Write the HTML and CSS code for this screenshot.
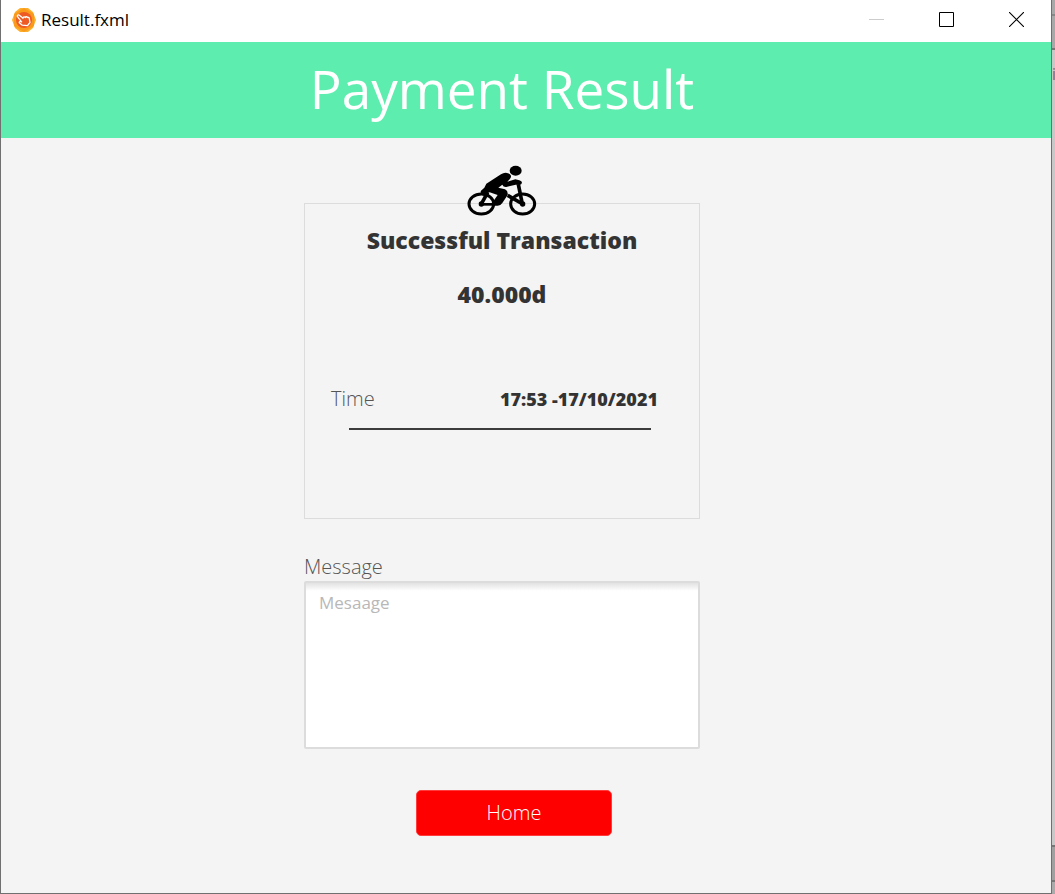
FILE: index.html
```html
<!DOCTYPE html>
<html lang="en">
<head>
<meta charset="utf-8">
<title>Result.fxml</title>
<link rel="stylesheet" href="styles.css">
</head>
<body>
<div class="desktop">
  <div class="window">
    <header class="titlebar">
      <svg class="app-icon" viewBox="0 0 24 24" aria-hidden="true">
        <path d="M8 0h8l5 4 3 8-3 8-5 4H8l-5-4-3-8 3-8z" fill="#fcb02c"/>
        <path d="M12 0l5 3 5 3v12l-5 3-5 3-5-3-5-3V6l5-3z" fill="#f99a1c"/>
        <circle cx="12" cy="12" r="8" fill="#ee5a24"/>
        <path d="M5.500 7.500c.6-.9 1.500-.6 2.200 0l3.300 2.700c0-1.500 1.500-1.700 2.300-.7.400-1 1.700-1 2.200 0 .8-.5 1.600 0 1.800 1l.7 4-2.500 3.200-5.200-.5-3-2.500c-.3-1 .5-1.400 1.300-1.200l1 .4L6 9.300c-.6-.6-.9-1.200-.5-1.800z" fill="#ee5a24" stroke="#fff" stroke-width="1.300" stroke-linejoin="round"/>
      </svg>
      <span class="titlebar-text">Result.fxml</span>
      <div class="window-controls">
        <button class="control" aria-label="Minimize" disabled>
          <svg class="control-icon" viewBox="0 0 15 15"><path d="M0 7.500h15" stroke="#ccc"/></svg>
        </button>
        <button class="control" aria-label="Maximize">
          <svg class="control-icon" viewBox="0 0 15 15"><path d="M.5.5h14v14H.5z" fill="none" stroke="#000"/></svg>
        </button>
        <button class="control" aria-label="Close">
          <svg class="control-icon" viewBox="0 0 15 15"><path d="M0 0l15 15M15 0L0 15" stroke="#000" stroke-width="1.100"/></svg>
        </button>
      </div>
    </header>
    <div class="banner columns">
      <h1 class="banner-title">Payment Result</h1>
    </div>
    <main class="columns">
      <div class="content">
        <section class="card">
          <svg class="bike" viewBox="36 30 210 153" aria-hidden="true">
            <g fill="none" stroke="#000">
              <ellipse cx="79" cy="147" rx="37" ry="30" stroke-width="9"/>
              <ellipse cx="203" cy="147" rx="36" ry="30" stroke-width="9"/>
              <path d="M98 112L79 147" stroke-width="11"/>
              <path d="M79 148h36" stroke-width="8"/>
              <path d="M190 88l12 59" stroke-width="11"/>
              <path d="M158 121l45 26" stroke-width="11"/>
            </g>
            <ellipse cx="182" cy="47" rx="18" ry="15"/>
            <circle cx="79" cy="147" r="8"/>
            <circle cx="203" cy="147" r="8"/>
            <path d="M88 98l6-12 44-28q9-6 18-4 10 2 12 8 1 6-4 11l-7 7 24-7 12 3q8 2 8 7-1 6-8 7l-11-1-28 7q-9 1-12-7l-12 9 20 5q10 5 8 17l-16 24q-5 8-14 8h-12q-5-4-2-12l14-20-24-8-14 6-10-1q-5-5-2-10z"/>
          </svg>
          <h2 class="headline">Successful Transaction</h2>
          <p class="headline">40.000d</p>
          <dl class="detail">
            <dt class="detail-name">Time</dt>
            <dd class="detail-value">17:53 -17/10/2021</dd>
          </dl>
          <hr class="rule">
        </section>
        <label class="message-label" for="message">Message</label>
        <textarea class="message" id="message" placeholder="Mesaage"></textarea>
        <button class="home">Home</button>
      </div>
    </main>
  </div>
  <div class="backdrop" aria-hidden="true">i</div>
</div>
</body>
</html>
```
FILE: styles.css
```css
* {
  box-sizing: border-box;
}

body {
  margin: 0;
  font-family: "Open Sans", "Noto Sans", sans-serif;
  color: #333;
}

h1, h2, p, dl, dd {
  margin: 0;
}

button, textarea {
  font-family: inherit;
}

.desktop {
  display: flex;
  min-height: 100vh;
}

.window {
  flex: 1;
  display: flex;
  flex-direction: column;
  background: #f4f4f4;
  border: 1px solid #707070;
  border-top: 0;
}

.backdrop {
  width: 3px;
  padding-top: 64px;
  overflow: hidden;
  font-size: 16px;
  line-height: 20px;
  color: #8a6050;
  background: linear-gradient(#a8a8a8 0 14px, #888 14px 16px, #a8a8a8 16px 48px, #777 48px 50px, #c8c8c8 50px 845px, #777 845px 847px, #a0a0a0 847px 880px, #777 880px 882px, #aaa 882px);
}

.titlebar {
  display: flex;
  align-items: center;
  height: 42px;
  padding: 0 0 3px 11px;
  background: #fff;
}

.app-icon {
  width: 24px;
  height: 24px;
  margin-right: 5px;
}

.titlebar-text {
  font-size: 17px;
  line-height: 24px;
  color: #000;
}

.window-controls {
  display: flex;
  margin-left: auto;
}

.control {
  display: flex;
  align-items: center;
  justify-content: center;
  width: 70px;
  height: 39px;
  padding: 0;
  border: 0;
  background: none;
}

.control-icon {
  width: 15px;
  height: 15px;
}

.columns {
  display: grid;
  grid-template-columns: 303fr 396px 351fr;
}

.banner {
  background: #5deeaf;
}

.banner-title {
  grid-column: 2;
  justify-self: center;
  font-size: 53px;
  font-weight: 400;
  line-height: 94px;
  padding-bottom: 2px;
  white-space: nowrap;
  color: #fff;
}

.content {
  grid-column: 2;
  display: flex;
  flex-direction: column;
  padding: 65px 0 56px;
}

.card {
  position: relative;
  display: flex;
  flex-direction: column;
  min-height: 316px;
  padding: 19px 24px;
  border: 1px solid #dcdcdc;
}

.bike {
  position: absolute;
  top: -39px;
  left: 50%;
  width: 70px;
  height: 51px;
  margin-left: -35px;
}

.headline {
  margin-bottom: 20px;
  font-size: 23px;
  font-weight: 800;
  line-height: 34px;
  text-align: center;
}

.detail {
  display: flex;
  align-items: center;
  justify-content: space-between;
  margin-top: 52px;
  padding: 0 17px 0 2px;
  line-height: 32px;
}

.detail-name {
  font-size: 20px;
  font-weight: 300;
  color: #555;
}

.detail-value {
  font-size: 18px;
  font-weight: 800;
}

.rule {
  width: 302px;
  height: 2px;
  margin: 13px 24px 0 20px;
  border: 0;
  background: #3c3c3c;
}

.message-label {
  margin-top: 34px;
  font-size: 20px;
  font-weight: 300;
  line-height: 28px;
  color: #555;
}

.message {
  width: 100%;
  height: 168px;
  padding: 8px 13px;
  border: 2px solid #dcdcdc;
  border-radius: 2px;
  background: linear-gradient(#e2e2e2, #fff 8px);
  font-size: 17px;
  line-height: 24px;
  color: #333;
  resize: none;
}

.message::placeholder {
  color: #b8b8b8;
  opacity: 1;
}

.home {
  width: 196px;
  margin: 41px 0 0 112px;
  padding: 0;
  border: 1px solid #ff3b3b;
  border-radius: 5px;
  background: #f00;
  font-size: 20px;
  font-weight: 300;
  line-height: 44px;
  color: #fff;
}
```
